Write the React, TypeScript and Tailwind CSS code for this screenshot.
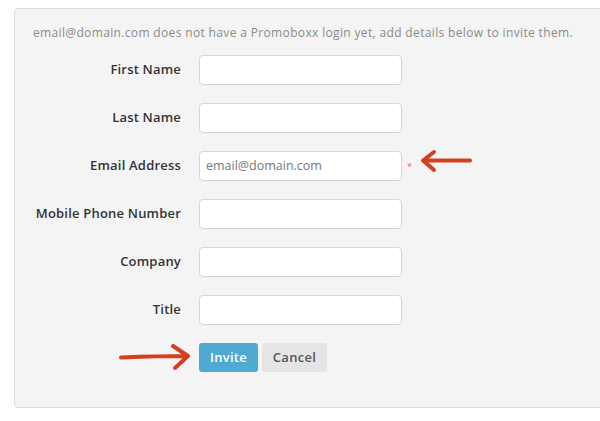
import React from "react";

const fields = [
    { label: "First Name", value: "" },
    { label: "Last Name", value: "" },
    { label: "Email Address", value: "email@domain.com", required: true },
    { label: "Mobile Phone Number", value: "" },
    { label: "Company", value: "" },
    { label: "Title", value: "" },
];

function LeftArrow() {
    return (
        <svg className="absolute left-[418px] top-[148px]" width="58" height="26" viewBox="0 0 58 26">
            <path
                d="M5 12.5 L52 12.5 M16 4 L5 12.5 L16 22"
                fill="none"
                stroke="#d3401f"
                strokeWidth="4"
                strokeLinecap="round"
                strokeLinejoin="round"
            />
        </svg>
    );
}

function RightArrow() {
    return (
        <svg className="absolute left-[116px] top-[341px]" width="78" height="32" viewBox="0 0 78 32">
            <path
                d="M5 16.5 Q40 15 72 15 M57 5 L72 15 L59 27"
                fill="none"
                stroke="#d3401f"
                strokeWidth="4"
                strokeLinecap="round"
                strokeLinejoin="round"
            />
        </svg>
    );
}

export default function App() {
    return (
        <div className="relative w-[600px] h-[421px] bg-white overflow-hidden font-['Open_Sans',sans-serif]">
            <div className="ml-[14px] mt-[8px] w-[620px] h-[400px] bg-[#f4f4f4] border border-[#dcdcdc] rounded-[4px] pt-[16px]">
                <p className="pl-[18px] text-[12px] tracking-[0.35px] leading-[16px] text-[#8a8a8a] whitespace-nowrap">
                    email@domain.com does not have a Promoboxx login yet, add details below to invite them.
                </p>
                <div className="mt-[14px] flex flex-col gap-[18px]">
                    {fields.map((f) => (
                        <div key={f.label} className="flex items-center">
                            <label className="w-[166px] text-right text-[13px] tracking-[0.2px] font-semibold text-[#333]">
                                {f.label}
                            </label>
                            <div className="ml-[18px] w-[203px] h-[30px] bg-white border border-[#d6d6d6] rounded-[4px] flex items-center px-[6px] text-[12.5px] text-[#777]">
                                {f.value}
                            </div>
                            {f.required && <span className="ml-[5px] text-[9px] text-[#e0604a] leading-none">*</span>}
                        </div>
                    ))}
                    <div className="flex gap-[4px] pl-[184px]">
                        <button className="w-[59px] h-[29px] rounded-[3px] bg-[#4eaad0] text-white text-[13px] tracking-[0.3px] font-semibold">
                            Invite
                        </button>
                        <button className="w-[65px] h-[29px] rounded-[3px] bg-[#e5e5e5] text-[#555] text-[13px] tracking-[0.3px] font-semibold">
                            Cancel
                        </button>
                    </div>
                </div>
            </div>
            <LeftArrow />
            <RightArrow />
        </div>
    );
}
